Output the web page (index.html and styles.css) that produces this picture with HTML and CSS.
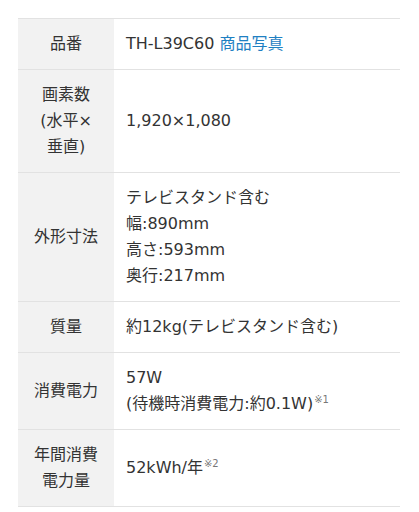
FILE: index.html
```html
<!DOCTYPE html>
<html lang="ja">
<head>
<meta charset="utf-8">
<link rel="stylesheet" href="styles.css">
</head>
<body>
<table class="spec">
  <tr>
    <th>品番</th>
    <td>TH-L39C60 <a class="link" href="#">商品写真</a></td>
  </tr>
  <tr>
    <th>画素数<br>(水平×<br>垂直)</th>
    <td>1,920×1,080</td>
  </tr>
  <tr>
    <th>外形寸法</th>
    <td>テレビスタンド含む<br>幅:890mm<br>高さ:593mm<br>奥行:217mm</td>
  </tr>
  <tr>
    <th>質量</th>
    <td>約12kg(テレビスタンド含む)</td>
  </tr>
  <tr>
    <th>消費電力</th>
    <td>57W<br>(待機時消費電力:約0.1W)<sup class="note">※1</sup></td>
  </tr>
  <tr>
    <th>年間消費<br>電力量</th>
    <td>52kWh/年<sup class="note">※2</sup></td>
  </tr>
</table>
</body>
</html>
```
FILE: styles.css
```css
html, body {
  margin: 0;
  padding: 0;
  background: #ffffff;
}
body {
  padding: 18px 19px 0 18px;
  font-family: "DejaVu Sans", "Noto Sans CJK JP", sans-serif;
  font-size: 16px;
  line-height: 26px;
  color: #333333;
}
.spec {
  width: 382px;
  border-collapse: collapse;
  border-top: 1px solid #e2e2e2;
}
.spec tr {
  border-bottom: 1px solid #e2e2e2;
}
.spec th {
  width: 96px;
  background: #f2f2f2;
  font-weight: normal;
  text-align: center;
  vertical-align: middle;
  padding: 12px 0;
}
.spec td {
  padding: 12px 0 12px 12px;
  text-align: left;
  vertical-align: middle;
}
.link {
  color: #1f80c2;
  text-decoration: none;
}
.note {
  font-size: 10px;
  line-height: 0;
  color: #777777;
  vertical-align: 6px;
  margin-left: 1px;
}
```
